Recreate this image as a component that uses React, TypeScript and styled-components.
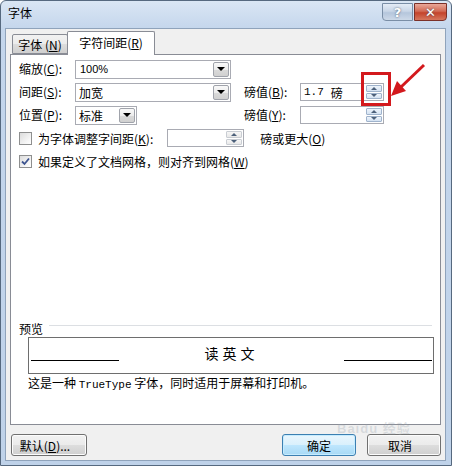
import React from "react";
import styled, { createGlobalStyle } from "styled-components";

const GlobalStyle = createGlobalStyle`
  html, body {
    margin: 0;
    padding: 0;
    background: #ffffff;
  }
  body {
    font-family: "Noto Sans CJK SC", "Noto Sans", sans-serif;
    font-size: 12px;
    color: #000;
  }
`;

const Window = styled.div`
  position: relative;
  width: 452px;
  height: 466px;
  box-sizing: border-box;
  border: 1px solid #56697f;
  border-radius: 6px 6px 0 0;
  background: linear-gradient(#dae6f4, #c4d6ec 28px, #bfd2e9);
  display: flex;
  flex-direction: column;
  padding: 0 5px 4px 4px;
  overflow: hidden;
`;

const TitleBar = styled.div`
  height: 27px;
  display: flex;
  align-items: flex-start;
  justify-content: space-between;
  padding-left: 3px;
`;

const Title = styled.span`
  margin-top: 5px;
  font-size: 12px;
  line-height: 14px;
`;

const CaptionButtons = styled.div`
  display: flex;
  gap: 1px;
  margin-top: 2px;
  margin-right: -1px;
`;

const CaptionButton = styled.div<{ $close?: boolean }>`
  width: ${(p) => (p.$close ? 33 : 31)}px;
  height: 18px;
  box-sizing: border-box;
  border: 1px solid ${(p) => (p.$close ? "#7b3028" : "#7a8ea6")};
  border-radius: ${(p) => (p.$close ? "0 0 4px 0" : "0 0 0 4px")};
  background: ${(p) =>
    p.$close
      ? "linear-gradient(#e9a899, #d26a55 45%, #c4432b 55%, #d5775e)"
      : "linear-gradient(#e4ecf6, #c9d6e7 45%, #b5c6dc 55%, #cdd9e8)"};
  display: flex;
  align-items: center;
  justify-content: center;
  color: #fff;
  font-family: "DejaVu Sans", sans-serif;
  font-weight: bold;
  font-size: 13px;
  text-shadow: 0 0 2px #3d4d63;
`;

const Client = styled.div`
  flex: 1;
  background: #f0f0f0;
  border: 1px solid #8fa3bb;
  padding: 2px 4px 0 4px;
  display: flex;
  flex-direction: column;
`;

const TabStrip = styled.div`
  display: flex;
  align-items: flex-end;
  padding-left: 2px;
  height: 23px;
  position: relative;
  z-index: 1;
`;

const Tab = styled.div<{ $active?: boolean; $w: number }>`
  width: ${(p) => p.$w}px;
  height: ${(p) => (p.$active ? 24 : 20)}px;
  box-sizing: border-box;
  border: 1px solid #898c95;
  border-bottom: ${(p) => (p.$active ? "none" : "1px solid #898c95")};
  margin-left: ${(p) => (p.$active ? -1 : 0)}px;
  margin-bottom: ${(p) => (p.$active ? -1 : 0)}px;
  border-radius: 2px 2px 0 0;
  background: ${(p) =>
    p.$active ? "#ffffff" : "linear-gradient(#f2f2f2, #ebebeb 50%, #dddddd 51%, #cfcfcf)"};
  display: flex;
  align-items: center;
  justify-content: center;
  padding-bottom: ${(p) => (p.$active ? 2 : 0)}px;
`;

const Panel = styled.div`
  height: 371px;
  box-sizing: border-box;
  border: 1px solid #898c95;
  background: #ffffff;
  padding: 5px 8px 32px 8px;
  display: flex;
  flex-direction: column;
`;

const FieldGrid = styled.div`
  display: grid;
  grid-template-columns: 56px 156px 13px 56px 84px;
  grid-auto-rows: 18px;
  row-gap: 5px;
  align-items: center;
`;

const Label = styled.span<{ $col?: number }>`
  grid-column: ${(p) => p.$col ?? 1};
  white-space: nowrap;
  line-height: 14px;
`;

const Combo = styled.div<{ $w: number }>`
  grid-column: 2;
  width: ${(p) => p.$w}px;
  height: 19px;
  box-sizing: border-box;
  border: 1px solid #a9abb3;
  background: #fff;
  display: flex;
  align-items: center;
`;

const ComboText = styled.span<{ $latin?: boolean }>`
  flex: 1;
  padding-left: ${(p) => (p.$latin ? 4 : 3)}px;
  font-size: ${(p) => (p.$latin ? 11 : 12)}px;
  font-family: ${(p) => (p.$latin ? '"Liberation Sans", sans-serif' : "inherit")};
`;

const DropButton = styled.span`
  width: 16px;
  height: 15px;
  margin-right: 1px;
  box-sizing: border-box;
  border: 1px solid #a0a3ab;
  border-radius: 2px;
  background: linear-gradient(#f9f9f9, #ececec 50%, #dadada 51%, #d0d0d0);
  display: flex;
  align-items: center;
  justify-content: center;
`;

const DownTriangle = styled.span`
  width: 0;
  height: 0;
  border-left: 4px solid transparent;
  border-right: 4px solid transparent;
  border-top: 4px solid #000;
`;

const SpinBox = styled.div<{ $w: number; $col?: number }>`
  grid-column: ${(p) => p.$col ?? 5};
  width: ${(p) => p.$w}px;
  height: 18px;
  box-sizing: border-box;
  border: 1px solid #a9abb3;
  background: #fff;
  display: flex;
  align-items: stretch;
`;

const SpinText = styled.span`
  flex: 1;
  padding-left: 3px;
  display: flex;
  align-items: center;
  gap: 7px;
`;

const Latin = styled.span`
  font-family: "Liberation Mono", monospace;
  font-size: 11px;
`;

const SpinButtons = styled.div`
  width: 16px;
  display: flex;
  flex-direction: column;
  gap: 1px;
  padding: 1px 1px 1px 0;
`;

const SpinHalf = styled.div<{ $dim?: boolean }>`
  flex: 1;
  box-sizing: border-box;
  border: 1px solid ${(p) => (p.$dim ? "#c9cdd3" : "#9fb3cc")};
  border-radius: 1px;
  background: ${(p) =>
    p.$dim ? "linear-gradient(#f6f6f6, #e8e8e8)" : "linear-gradient(#eef4fb, #d4e2f2)"};
  display: flex;
  align-items: center;
  justify-content: center;
`;

const Tri = styled.span<{ $up?: boolean }>`
  width: 0;
  height: 0;
  border-left: 3px solid transparent;
  border-right: 3px solid transparent;
  ${(p) => (p.$up ? "border-bottom: 3px solid #4c607a;" : "border-top: 3px solid #4c607a;")}
`;

const CheckRow = styled.div`
  display: flex;
  align-items: center;
  height: 18px;
  margin-top: 5px;
`;

const CheckBox = styled.span`
  width: 13px;
  height: 13px;
  box-sizing: border-box;
  border: 1px solid #8e8f8f;
  background: linear-gradient(135deg, #dcdcdc, #f6f6f6 70%, #ffffff);
  margin-right: 6px;
  display: flex;
  align-items: center;
  justify-content: center;
`;

const Trailing = styled.span<{ $ml: number }>`
  margin-left: ${(p) => p.$ml}px;
`;

const PreviewSection = styled.div`
  margin-top: auto;
  display: flex;
  flex-direction: column;
`;

const GroupHead = styled.div`
  display: flex;
  align-items: center;
  gap: 6px;
  height: 14px;
`;

const GroupLine = styled.span`
  flex: 1;
  border-top: 1px solid #dcdfe3;
  margin-top: -5px;
`;

const PreviewBox = styled.div`
  margin: 2px 0 0 9px;
  width: 406px;
  height: 37px;
  box-sizing: border-box;
  border: 1px solid #6e6e6e;
  display: flex;
  align-items: center;
  padding: 0 1px 0 2px;
`;

const Rule = styled.span`
  width: 88px;
  border-top: 1px solid #000;
  align-self: flex-end;
  margin-bottom: 12px;
`;

const PreviewText = styled.span`
  flex: 1;
  text-align: center;
  font-size: 14px;
  letter-spacing: 4px;
  margin-top: -5px;
`;

const Caption = styled.div`
  margin: 2px 0 0 9px;
  line-height: 14px;
`;

const ButtonRow = styled.div`
  display: flex;
  align-items: center;
  margin-top: 9px;
  padding-left: 1px;
  gap: 11px;
`;

const PushButton = styled.div<{ $w: number; $default?: boolean; $push?: boolean }>`
  width: ${(p) => p.$w}px;
  height: 22px;
  box-sizing: border-box;
  border: 1px solid ${(p) => (p.$default ? "#3c7fb1" : "#707070")};
  border-radius: 3px;
  background: ${(p) =>
    p.$default
      ? "linear-gradient(#eaf6fd, #d9f0fc 50%, #bee6fd 51%, #a7d9f5)"
      : "linear-gradient(#f2f2f2, #ebebeb 50%, #dddddd 51%, #cfcfcf)"};
  box-shadow: ${(p) => (p.$default ? "inset 0 0 0 1px #c6ecff" : "inset 0 0 0 1px #fcfcfc")};
  margin-left: ${(p) => (p.$push ? "auto" : "0")};
  display: flex;
  align-items: center;
  justify-content: center;
  padding-right: ${(p) => (p.$push || p.$default ? 0 : 8)}px;
`;

const RedFrame = styled.div`
  position: absolute;
  left: 360px;
  top: 71px;
  width: 30px;
  height: 34px;
  box-sizing: border-box;
  border: 3px solid #d3191d;
`;

const ArrowSvg = styled.svg`
  position: absolute;
  left: 0;
  top: 0;
  pointer-events: none;
`;

const Watermark = styled.div`
  position: absolute;
  left: 336px;
  top: 421px;
  line-height: 14px;
  font-family: "Liberation Sans", "Noto Sans CJK SC", sans-serif;
  font-size: 13px;
  font-weight: bold;
  color: rgba(150, 160, 170, 0.28);
  letter-spacing: 1px;
`;

const Spin = ({ dim }: { dim?: boolean }) => (
  <SpinButtons>
    <SpinHalf $dim={dim}>
      <Tri $up />
    </SpinHalf>
    <SpinHalf $dim={dim}>
      <Tri />
    </SpinHalf>
  </SpinButtons>
);

export default function App() {
  return (
    <>
      <GlobalStyle />
      <Window>
        <TitleBar>
          <Title>字体</Title>
          <CaptionButtons>
            <CaptionButton>?</CaptionButton>
            <CaptionButton $close>✕</CaptionButton>
          </CaptionButtons>
        </TitleBar>
        <Client>
          <TabStrip>
            <Tab $w={56}>
              字体 (<u>N</u>)
            </Tab>
            <Tab $w={88} $active>
              字符间距(<u>R</u>)
            </Tab>
          </TabStrip>
          <Panel>
            <FieldGrid>
              <Label>
                缩放(<u>C</u>):
              </Label>
              <Combo $w={156}>
                <ComboText $latin>100%</ComboText>
                <DropButton>
                  <DownTriangle />
                </DropButton>
              </Combo>
              <span />
              <span />
              <span />

              <Label>
                间距(<u>S</u>):
              </Label>
              <Combo $w={156}>
                <ComboText>加宽</ComboText>
                <DropButton>
                  <DownTriangle />
                </DropButton>
              </Combo>
              <span />
              <Label $col={4}>
                磅值(<u>B</u>):
              </Label>
              <SpinBox $w={84}>
                <SpinText>
                  <Latin>1.7</Latin>磅
                </SpinText>
                <Spin />
              </SpinBox>

              <Label>
                位置(<u>P</u>):
              </Label>
              <Combo $w={62}>
                <ComboText>标准</ComboText>
                <DropButton>
                  <DownTriangle />
                </DropButton>
              </Combo>
              <span />
              <Label $col={4}>
                磅值(<u>Y</u>):
              </Label>
              <SpinBox $w={84}>
                <SpinText />
                <Spin />
              </SpinBox>
            </FieldGrid>

            <CheckRow>
              <CheckBox />
              为字体调整字间距(<u>K</u>):
              <Trailing $ml={14}>
                <SpinBox $w={77}>
                  <SpinText />
                  <Spin dim />
                </SpinBox>
              </Trailing>
              <Trailing $ml={16}>
                磅或更大(<u>O</u>)
              </Trailing>
            </CheckRow>

            <CheckRow>
              <CheckBox>
                <svg width="9" height="9" viewBox="0 0 9 9">
                  <path d="M1 4.5 L3.5 7 L8 1.5" fill="none" stroke="#3e5590" strokeWidth="1.8" />
                </svg>
              </CheckBox>
              如果定义了文档网格，则对齐到网格(<u>W</u>)
            </CheckRow>

            <PreviewSection>
              <GroupHead>
                预览
                <GroupLine />
              </GroupHead>
              <PreviewBox>
                <Rule />
                <PreviewText>读英文</PreviewText>
                <Rule />
              </PreviewBox>
              <Caption>
                这是一种 <Latin>TrueType</Latin> 字体，同时适用于屏幕和打印机。
              </Caption>
            </PreviewSection>
          </Panel>
          <ButtonRow>
            <PushButton $w={76}>
              默认(<u>D</u>)...
            </PushButton>
            <PushButton $w={74} $default $push>
              确定
            </PushButton>
            <PushButton $w={74}>取消</PushButton>
          </ButtonRow>
        </Client>
        <RedFrame />
        <ArrowSvg width="452" height="466" viewBox="0 0 452 466">
          <line x1="423" y1="64" x2="400" y2="86" stroke="#d3191d" strokeWidth="3" />
          <polygon points="390,95 405,90 396,80" fill="#d3191d" />
        </ArrowSvg>
        <Watermark>Baidu 经验</Watermark>
      </Window>
    </>
  );
}
